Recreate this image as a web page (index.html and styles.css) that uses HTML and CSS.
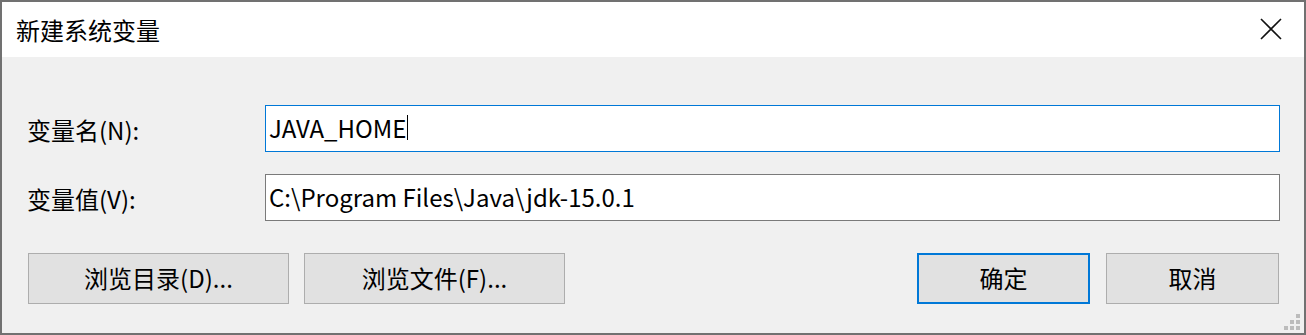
FILE: index.html
```html
<!DOCTYPE html>
<html lang="zh-CN">
<head>
<meta charset="utf-8">
<title>新建系统变量</title>
<link rel="stylesheet" href="styles.css">
</head>
<body>
<div class="window">
  <div class="titlebar">
    <span class="title">新建系统变量</span>
    <span class="close" aria-label="关闭">
      <svg width="22" height="22" viewBox="0 0 22 22"><path d="M1 1 L21 21 M21 1 L1 21" stroke="#111" stroke-width="1.6" fill="none"/></svg>
    </span>
  </div>
  <div class="content">
    <div class="form">
      <label class="label">变量名(N):</label>
      <div class="field focused"><span>JAVA_HOME</span><span class="caret"></span></div>
      <label class="label">变量值(V):</label>
      <div class="field"><span>C:\Program Files\Java\jdk-15.0.1</span></div>
    </div>
    <div class="buttons">
      <div class="group">
        <button class="btn wide">浏览目录(D)...</button>
        <button class="btn wide">浏览文件(F)...</button>
      </div>
      <div class="group right">
        <button class="btn default">确定</button>
        <button class="btn">取消</button>
      </div>
    </div>
    <div class="grip">
      <i></i><i></i><i></i><i></i><i></i><i></i>
    </div>
  </div>
</div>
</body>
</html>
```
FILE: styles.css
```css
* { box-sizing: border-box; }
html, body { margin: 0; padding: 0; background: #6f6f6f; }
body {
  font-family: "Noto Sans CJK SC", "Noto Sans", sans-serif;
  font-size: 24px;
  color: #000;
}
.window {
  width: 1306px;
  height: 335px;
  border: 2px solid #717171;
  display: flex;
  flex-direction: column;
  background: #f0f0f0;
}
.titlebar {
  height: 55px;
  background: #fff;
  display: flex;
  align-items: center;
  justify-content: space-between;
  padding: 0 22px 0 14px;
}
.title { font-size: 24px; line-height: 1; }
.close { display: flex; width: 22px; height: 22px; margin-top: -2px; }
.content {
  flex: 1;
  position: relative;
  padding: 48px 0 0 0;
}
.form {
  display: grid;
  grid-template-columns: 238px 1fr;
  row-gap: 22px;
  padding: 0 24px 0 25px;
  align-items: center;
}
.label { line-height: 1; padding-top: 2px; }
.field {
  height: 47px;
  background: #fff;
  border: 1px solid #7a7a7a;
  display: flex;
  align-items: center;
  padding: 0 3px 2px 3px;
  line-height: 1;
  white-space: nowrap;
}
.field.focused { border-color: #0078d7; }
.caret {
  display: inline-block;
  width: 1px;
  height: 25px;
  background: #000;
  margin-left: 1px;
}
.buttons {
  display: flex;
  justify-content: space-between;
  margin-top: 32px;
  padding: 0 25px 0 26px;
}
.group { display: flex; gap: 15px; }
.group.right { gap: 16px; }
.btn {
  font: inherit;
  color: #000;
  width: 173px;
  height: 51px;
  background: #e1e1e1;
  border: 1px solid #adadad;
  padding: 0 0 2px 0;
  line-height: 1;
}
.btn.wide { width: 261px; }
.btn.default { border: 2px solid #0078d7; }
.grip {
  position: absolute;
  right: 4px;
  bottom: 3px;
  width: 16px;
  height: 16px;
  display: grid;
  grid-template-columns: repeat(3, 4px);
  grid-template-rows: repeat(3, 4px);
  gap: 2px;
}
.grip i { background: #bcbcbc; }
.grip i:nth-child(1) { grid-column: 3; grid-row: 1; }
.grip i:nth-child(2) { grid-column: 2; grid-row: 2; }
.grip i:nth-child(3) { grid-column: 3; grid-row: 2; }
.grip i:nth-child(4) { grid-column: 1; grid-row: 3; }
.grip i:nth-child(5) { grid-column: 2; grid-row: 3; }
.grip i:nth-child(6) { grid-column: 3; grid-row: 3; }
```
